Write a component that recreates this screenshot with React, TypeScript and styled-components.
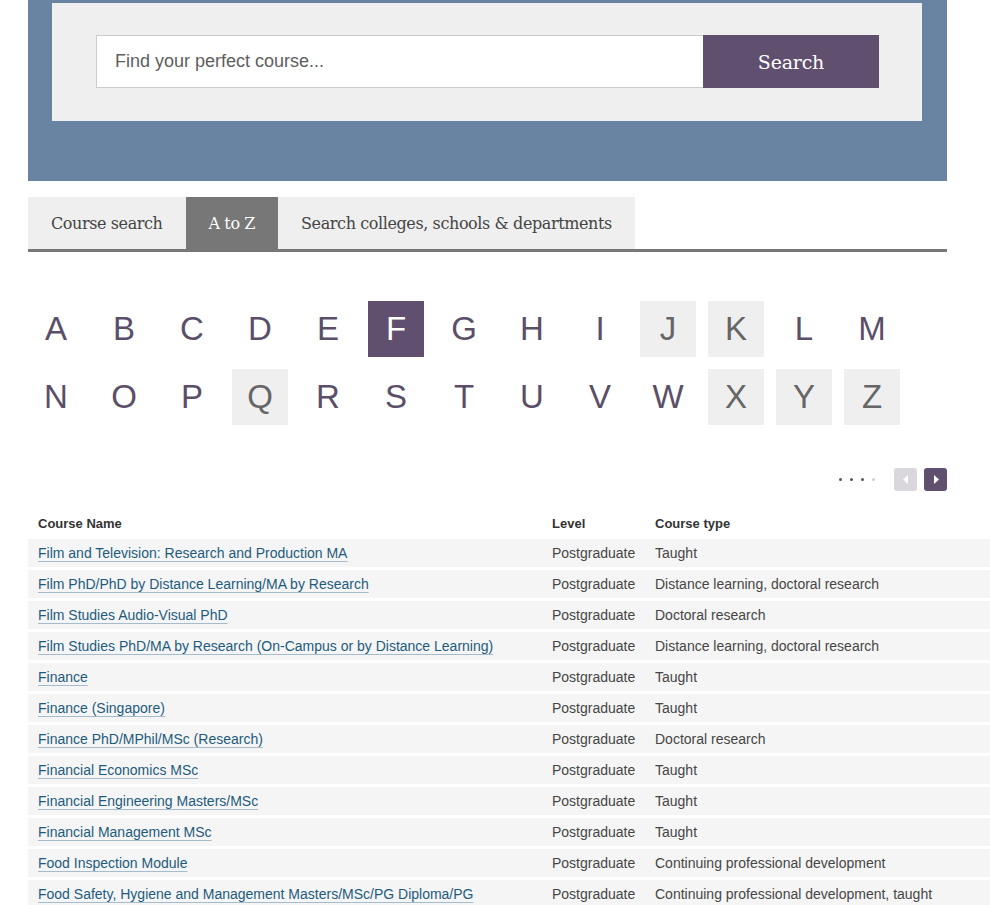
import styled, { createGlobalStyle } from "styled-components";

const letters = "ABCDEFGHIJKLMNOPQRSTUVWXYZ".split("");
const empty = ["J", "K", "Q", "X", "Y", "Z"];
const current = "F";

const courses = [
  ["Film and Television: Research and Production MA", "Taught"],
  ["Film PhD/PhD by Distance Learning/MA by Research", "Distance learning, doctoral research"],
  ["Film Studies Audio-Visual PhD", "Doctoral research"],
  ["Film Studies PhD/MA by Research (On-Campus or by Distance Learning)", "Distance learning, doctoral research"],
  ["Finance", "Taught"],
  ["Finance (Singapore)", "Taught"],
  ["Finance PhD/MPhil/MSc (Research)", "Doctoral research"],
  ["Financial Economics MSc", "Taught"],
  ["Financial Engineering Masters/MSc", "Taught"],
  ["Financial Management MSc", "Taught"],
  ["Food Inspection Module", "Continuing professional development"],
  ["Food Safety, Hygiene and Management Masters/MSc/PG Diploma/PG Certificate", "Continuing professional development, taught"],
];

function App() {
  return (
    <>
      <GlobalStyle />
      <Page>
        <Hero>
          <SearchBox>
            <SearchInput placeholder="Find your perfect course..." />
            <SearchButton>Search</SearchButton>
          </SearchBox>
        </Hero>

        <Tabs>
          <Tab>Course search</Tab>
          <Tab $active>A to Z</Tab>
          <Tab>Search colleges, schools &amp; departments</Tab>
        </Tabs>

        <Letters>
          {letters.map((l) => (
            <Letter key={l} $active={l === current} $empty={empty.includes(l)}>
              {l}
            </Letter>
          ))}
        </Letters>

        <Pager>
          <Dots>
            <Dot />
            <Dot />
            <Dot />
            <Dot $off />
          </Dots>
          <PageButton $disabled aria-label="Previous">
            <svg width="6" height="9" viewBox="0 0 6 9">
              <path d="M5 0 L0 4.5 L5 9 Z" fill="#fff" />
            </svg>
          </PageButton>
          <PageButton aria-label="Next">
            <svg width="6" height="9" viewBox="0 0 6 9">
              <path d="M1 0 L6 4.5 L1 9 Z" fill="#fff" />
            </svg>
          </PageButton>
        </Pager>

        <Table>
          <HeadRow>
            <Cell>Course Name</Cell>
            <Cell>Level</Cell>
            <Cell>Course type</Cell>
          </HeadRow>
          {courses.map(([name, type]) => (
            <Row key={name}>
              <Cell>
                <CourseLink href="#">{name}</CourseLink>
              </Cell>
              <Cell>Postgraduate</Cell>
              <Cell>{type}</Cell>
            </Row>
          ))}
        </Table>
      </Page>
    </>
  );
}

const GlobalStyle = createGlobalStyle`
  body {
    margin: 0;
    background: #fff;
    font-family: "Liberation Sans", Arial, sans-serif;
  }
`;

const Page = styled.div`
  padding-left: 28px;
  width: 962px;
  overflow: hidden;
`;

const Hero = styled.div`
  width: 919px;
  box-sizing: border-box;
  height: 181px;
  padding: 3px 25px 0 24px;
  background: #6884a2;
`;

const SearchBox = styled.div`
  display: flex;
  height: 118px;
  box-sizing: border-box;
  padding: 32px 43px 0 44px;
  background: #efefef;
`;

const SearchInput = styled.input`
  flex: 1;
  height: 53px;
  box-sizing: border-box;
  border: 1px solid #cccccc;
  border-right: none;
  padding: 0 18px;
  font-family: "Liberation Sans", Arial, sans-serif;
  font-size: 18px;
  color: #555;
  outline: none;

  &::placeholder {
    color: #5e5e5e;
  }
`;

const SearchButton = styled.button`
  width: 176px;
  height: 53px;
  border: none;
  background: #604f6f;
  color: #fff;
  font-family: Georgia, "DejaVu Serif", serif;
  font-size: 19px;
  letter-spacing: -0.2px;
  cursor: pointer;
`;

const Tabs = styled.div`
  display: flex;
  width: 919px;
  margin-top: 16px;
  border-bottom: 3px solid #777777;
`;

const Tab = styled.div<{ $active?: boolean }>`
  height: 52px;
  padding: 0 23px;
  display: flex;
  align-items: center;
  background: ${(p) => (p.$active ? "#777777" : "#efefef")};
  color: ${(p) => (p.$active ? "#ffffff" : "#444444")};
  font-family: Georgia, "DejaVu Serif", serif;
  font-size: 16px;
  letter-spacing: -0.4px;
`;

const Letters = styled.div`
  display: grid;
  grid-template-columns: repeat(13, 56px);
  gap: 12px;
  margin-top: 49px;
`;

const Letter = styled.a<{ $active?: boolean; $empty?: boolean }>`
  height: 56px;
  display: flex;
  align-items: center;
  justify-content: center;
  font-size: 33px;
  color: ${(p) => (p.$active ? "#ffffff" : p.$empty ? "#666666" : "#5b4e69")};
  background: ${(p) => (p.$active ? "#604f6f" : p.$empty ? "#efefef" : "transparent")};
  cursor: pointer;
`;

const Pager = styled.div`
  display: flex;
  align-items: center;
  justify-content: flex-end;
  width: 919px;
  margin-top: 43px;
  gap: 7px;
`;

const Dots = styled.div`
  display: flex;
  gap: 8px;
  margin-right: 12px;
`;

const Dot = styled.span<{ $off?: boolean }>`
  width: 3px;
  height: 3px;
  border-radius: 50%;
  background: ${(p) => (p.$off ? "#cfcfd4" : "#555566")};
`;

const PageButton = styled.button<{ $disabled?: boolean }>`
  width: 23px;
  height: 23px;
  padding: 0;
  border: none;
  border-radius: 3px;
  display: flex;
  align-items: center;
  justify-content: center;
  background: ${(p) => (p.$disabled ? "#d9d7dd" : "#604f6f")};
`;

const Table = styled.div`
  margin-top: 17px;
  width: 962px;
`;

const Row = styled.div`
  display: grid;
  grid-template-columns: 514px 103px 1fr;
  align-items: start;
  background: #f5f5f5;
  margin-top: 3px;
  padding: 6px 0 5px;
  font-size: 14px;
  line-height: 17px;
  color: #454545;
`;

const HeadRow = styled(Row)`
  background: transparent;
  margin-top: 0;
  padding: 7px 0 4px;
  font-size: 13px;
  font-weight: bold;
  color: #333;
`;

const Cell = styled.div`
  padding: 0 10px;
`;

const CourseLink = styled.a`
  color: #1d5b7e;
  text-decoration: underline;
  text-decoration-color: #a4bccd;
  text-underline-offset: 3px;
`;

export default App;
